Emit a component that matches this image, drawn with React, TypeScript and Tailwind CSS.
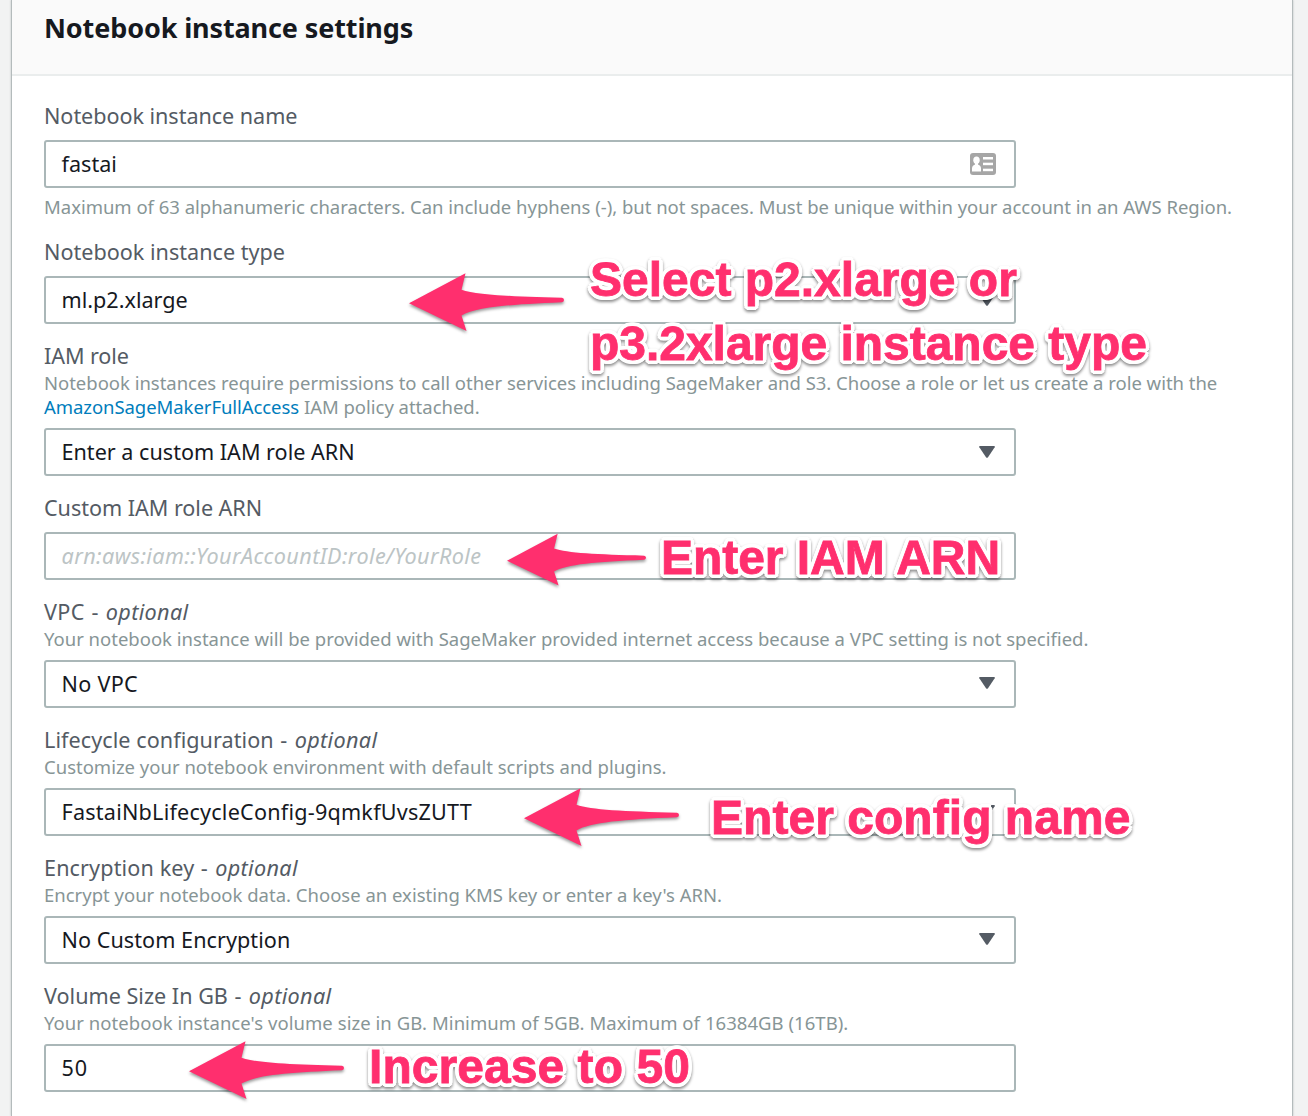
import type { ReactNode } from 'react';

function Caret({ raised }: { raised?: boolean }) {
  return (
    <svg
      className={`mr-[19px] h-3 w-4 shrink-0 ${raised ? '-translate-y-px' : ''}`}
      viewBox="0 0 16 12"
      fill="#545b64"
    >
      <path d="M1 0h14q1.300 0 .7 1.200L9 11.200q-1 1.200-2 0L.3 1.200Q-.3 0 1 0Z" />
    </svg>
  );
}

function ContactIcon() {
  return (
    <svg className="mr-[18px] h-[22px] w-[26px] shrink-0" viewBox="0 0 26 22">
      <rect width="26" height="22" rx="3" fill="#a6a6a6" />
      <g fill="#fff">
        <ellipse cx="6.500" cy="7.200" rx="3.200" ry="3.700" />
        <path d="M5 9h3v2.500c2 .8 3 2 3 4V18.500H2v-3c0-2 1-3.200 3-4Z" />
        <rect x="13" y="4" width="10" height="2.500" />
        <rect x="13" y="9.700" width="10" height="2.500" />
        <rect x="13" y="15.700" width="10" height="2.500" />
      </g>
    </svg>
  );
}

function Label({ children, optional }: { children: ReactNode; optional?: boolean }) {
  return (
    <div className="h-6 text-[21.6px] leading-6 whitespace-pre text-[#545b64]">
      {children}
      {optional && (
        <>
          <span className="tracking-[0.9px]"> - </span>
          <em className="tracking-[0.35px]">optional</em>
        </>
      )}
    </div>
  );
}

function Hint({ children }: { children: ReactNode }) {
  return <div className="-translate-y-px text-[18.5px] leading-6 whitespace-nowrap text-[#879596]">{children}</div>;
}

function Box({ children, icon }: { children: ReactNode; icon?: ReactNode }) {
  return (
    <div className="flex h-12 w-[972px] items-center justify-between rounded-[3px] border-2 border-[#aab7b8] bg-white pl-[15.5px] text-[21.6px] leading-6 whitespace-nowrap text-[#16191f]">
      <div>{children}</div>
      {icon}
    </div>
  );
}

function Arrow({ className }: { className: string }) {
  return (
    <svg
      className={`absolute overflow-visible drop-shadow-[0_2px_1.5px_rgba(0,0,0,0.4)] ${className}`}
      viewBox="0 0 155 58"
      fill="#ff2f6e"
    >
      <path d="M0 30.300 56.500 0.300 52.500 16.800C67 21.800 100 23.500 153 24.700q2 .3 2 2.200t-2 2.400C100 31.500 66 34.300 52.500 42.500L57.500 58Z" />
    </svg>
  );
}

function Note({ className, children }: { className: string; children: ReactNode }) {
  return (
    <div
      className={`absolute font-['Liberation_Sans',sans-serif] text-[48px] leading-[64px] font-bold whitespace-nowrap text-[#ff2f6e] drop-shadow-[0_2px_1.5px_rgba(0,0,0,0.45)] [-webkit-text-stroke:0.8px_#ff2f6e] [text-shadow:4px_0_#fff,3.7px_1.5px_#fff,2.8px_2.8px_#fff,1.5px_3.7px_#fff,0_4px_#fff,-1.5px_3.7px_#fff,-2.8px_2.8px_#fff,-3.7px_1.5px_#fff,-4px_0_#fff,-3.7px_-1.5px_#fff,-2.8px_-2.8px_#fff,-1.5px_-3.7px_#fff,0_-4px_#fff,1.5px_-3.7px_#fff,2.8px_-2.8px_#fff,3.7px_-1.5px_#fff] ${className}`}
    >
      {children}
    </div>
  );
}

export default function App() {
  return (
    <div className="relative h-[1116px] w-[1308px] overflow-hidden bg-[#f2f3f3] font-['Noto_Sans',sans-serif]">
      <main className="ml-[11px] h-full w-[1282px] border-x border-[#b4bbbc] bg-white shadow-[0_0_2px_rgba(0,28,36,0.25)]">
        <header className="h-[76px] border-b-2 border-[#eaeded] bg-[#fafafa] pt-3 pl-8">
          <h1 className="text-[27px] leading-8 font-bold tracking-[-0.12px] text-[#16191f]">
            Notebook instance settings
          </h1>
        </header>
        <form className="flex flex-col gap-5 pt-7 pl-8">
          <section>
            <Label><span className="tracking-[-0.05px]">Notebook instance name</span></Label>
            <div className="mt-3"><Box icon={<ContactIcon />}>fastai</Box></div>
            <div className="mt-2 tracking-[-0.014px]">
              <Hint>
                Maximum of 63 alphanumeric characters. Can include hyphens (-), but not spaces. Must be unique within your
                account in an AWS Region.
              </Hint>
            </div>
          </section>
          <section>
            <Label>Notebook instance type</Label>
            <div className="mt-3"><Box icon={<Caret />}>ml.p2.xlarge</Box></div>
          </section>
          <section>
            <Label><span className="tracking-[-0.1px]">IAM role</span></Label>
            <div className="mt-1 mb-2 tracking-[-0.02px]">
              <Hint>
                Notebook instances require permissions to call other services including SageMaker and S3. Choose a role or
                let us create a role with the
                <br />
                <a className="tracking-[-0.06px] text-[#007dbc]">AmazonSageMakerFullAccess</a> IAM policy attached.
              </Hint>
            </div>
            <Box icon={<Caret />}>Enter a custom IAM role ARN</Box>
          </section>
          <section>
            <Label><span className="tracking-[-0.04px]">Custom IAM role ARN</span></Label>
            <div className="mt-3">
              <Box><em className="tracking-[0.4px] text-[#bcc4c5]">arn:aws:iam::YourAccountID:role/YourRole</em></Box>
            </div>
          </section>
          <section>
            <Label optional><span className="tracking-[0.4px]">VPC</span></Label>
            <div className="mt-1 mb-2">
              <Hint>
                Your notebook instance will be provided with SageMaker provided internet access because a VPC setting is
                not specified.
              </Hint>
            </div>
            <Box icon={<Caret raised />}><span className="tracking-[0.3px]">No VPC</span></Box>
          </section>
          <section>
            <Label optional><span className="tracking-[0.06px]">Lifecycle configuration</span></Label>
            <div className="mt-1 mb-2">
              <Hint>Customize your notebook environment with default scripts and plugins.</Hint>
            </div>
            <Box icon={<Caret raised />}><span className="tracking-[0.22px]">FastaiNbLifecycleConfig-9qmkfUvsZUTT</span></Box>
          </section>
          <section>
            <Label optional><span className="tracking-[0.12px]">Encryption key</span></Label>
            <div className="mt-1 mb-2">
              <Hint>Encrypt your notebook data. Choose an existing KMS key or enter a key's ARN.</Hint>
            </div>
            <Box icon={<Caret raised />}><span className="tracking-[0.05px]">No Custom Encryption</span></Box>
          </section>
          <section>
            <Label optional>Volume Size In GB</Label>
            <div className="mt-1 mb-2 tracking-[0.05px]">
              <Hint>Your notebook instance's volume size in GB. Minimum of 5GB. Maximum of 16384GB (16TB).</Hint>
            </div>
            <Box><span className="tracking-[0.8px]">50</span></Box>
          </section>
        </form>
      </main>

      <Arrow className="top-[273px] left-[409px] h-[58px] w-[155px]" />
      <Note className="top-[248px] left-[590px]">
        Select p2.xlarge or
        <br />
        <span className="tracking-[-0.03px]">p3.2xlarge instance type</span>
      </Note>
      <Arrow className="top-[533px] left-[507px] h-[53px] w-[139px]" />
      <Note className="top-[526px] left-[661px] tracking-[-0.04px]">Enter IAM ARN</Note>
      <Arrow className="top-[788px] left-[524px] h-[58px] w-[155px]" />
      <Note className="top-[786px] left-[711px] tracking-[0.04px]">Enter config name</Note>
      <Arrow className="top-[1041px] left-[189px] h-[58px] w-[155px]" />
      <Note className="top-[1035px] left-[369px] tracking-[0.05px]">Increase to 50</Note>
    </div>
  );
}
